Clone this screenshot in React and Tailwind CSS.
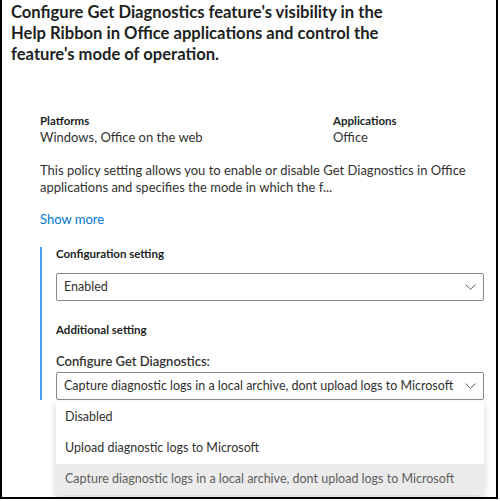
function Select({ value }) {
  return (
    <div className="flex h-[28px] items-center justify-between rounded-[2px] border border-[#8a8886] bg-white pl-[7px] pr-[7px]">
      <span className="whitespace-nowrap text-[12.5px] text-[#323130]">{value}</span>
      <svg width="11" height="6" viewBox="0 0 11 6" fill="none" className="text-[#605e5c]">
        <path d="M0.5 0.5 L5.5 5.3 L10.5 0.5" stroke="currentColor" strokeWidth="1" />
      </svg>
    </div>
  );
}

export default function App() {
  const options = [
    "Disabled",
    "Upload diagnostic logs to Microsoft",
    "Capture diagnostic logs in a local archive, dont upload logs to Microsoft",
  ];

  return (
    <div className="h-[499px] w-[498px] border-b-2 border-l-2 border-r-2 border-black bg-white font-['Lato',_'Open_Sans',_sans-serif] text-[#323130]">
      <h1 className="pl-[9px] pr-[100px] pt-[2px] text-[16.6px] font-bold leading-[21px] text-[#201f1e]">
        Configure Get Diagnostics feature's visibility in the Help Ribbon in Office applications and control the feature's mode of operation.
      </h1>

      <div className="pl-[38px] pr-[12px] pt-[49px]">
        <div className="flex">
          <div className="w-[293px]">
            <div className="text-[11.5px] font-bold leading-[14px] text-[#201f1e]">Platforms</div>
            <div className="text-[13px] leading-[18px]">Windows, Office on the web</div>
          </div>
          <div>
            <div className="text-[11.5px] font-bold leading-[14px] text-[#201f1e]">Applications</div>
            <div className="text-[13px] leading-[18px]">Office</div>
          </div>
        </div>

        <p className="mt-[16px] text-[13px] leading-[17px]">
          This policy setting allows you to enable or disable Get Diagnostics in Office applications and specifies the mode in which the f...
        </p>

        <button className="mt-[14px] text-[13px] leading-[18px] text-[#0078d4]">Show more</button>

        <div className="relative mt-[17px] border-l-2 border-[#479ef5] pl-[14px]">
          <div className="text-[11.5px] font-bold leading-[14px] text-[#201f1e]">Configuration setting</div>
          <div className="mt-[12px]">
            <Select value="Enabled" />
          </div>

          <div className="mt-[21px] text-[11.5px] font-bold leading-[16px] text-[#201f1e]">Additional setting</div>
          <div className="mt-[14px] text-[13px] font-semibold leading-[18px] text-[#323130]">Configure Get Diagnostics:</div>
          <div className="relative mt-[2px]">
            <Select value={options[2]} />
            <div className="absolute left-0 right-0 top-[30px] z-10 bg-white shadow-[0_3px_8px_rgba(0,0,0,0.18)]">
              {options.map((o, i) => (
                <div
                  key={o}
                  className={`flex h-[31px] items-center whitespace-nowrap pl-[9px] text-[12.5px] ${
                    i === 2 ? "bg-[#ebebeb] text-[#605e5c]" : "text-[#323130]"
                  }`}
                >
                  {o}
                </div>
              ))}
            </div>
          </div>
        </div>
      </div>
    </div>
  );
}
